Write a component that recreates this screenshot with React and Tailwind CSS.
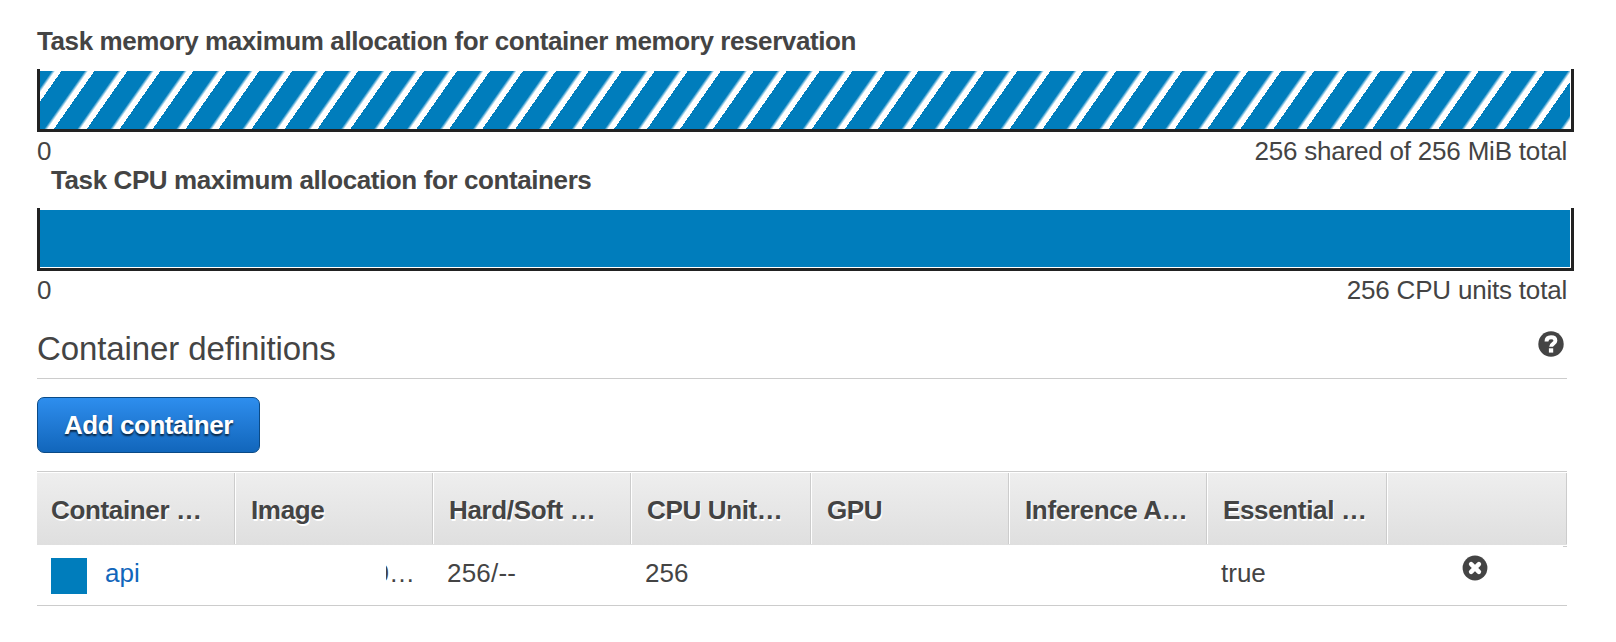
import React from "react";

const columns = [
  { label: "Container …", width: "w-[198px]" },
  { label: "Image", width: "w-[198px]" },
  { label: "Hard/Soft …", width: "w-[198px]" },
  { label: "CPU Unit…", width: "w-[180px]" },
  { label: "GPU", width: "w-[198px]" },
  { label: "Inference A…", width: "w-[198px]" },
  { label: "Essential …", width: "w-[180px]" },
  { label: "", width: "w-[180px]" },
];

function HelpIcon() {
  return (
    <svg viewBox="0 0 26 26" className="block size-[26px]" aria-hidden="true">
      <circle cx="13" cy="13" r="12.7" fill="#444" />
      <path
        d="M8.5 10.4C8.5 7.5 10.4 6.3 13 6.3C15.7 6.3 17.4 7.6 17.4 9.7C17.4 12.6 13.1 12.6 13.1 15.8"
        fill="none"
        stroke="#fff"
        strokeWidth="3.9"
      />
      <rect x="10.9" y="17.3" width="4.3" height="4.3" fill="#fff" />
    </svg>
  );
}

function RemoveIcon() {
  return (
    <svg viewBox="0 0 26 26" className="block size-[26px]" aria-hidden="true">
      <circle cx="13" cy="13" r="12.4" fill="#444" />
      <path d="M9.1 9.1L16.9 16.9M16.9 9.1L9.1 16.9" stroke="#fff" strokeWidth="4.5" strokeLinecap="round" />
    </svg>
  );
}

function Bar({ striped }) {
  return (
    <div className={`h-[63px] w-[1537px] border-x-[3px] border-b-[3px] border-[#222] pt-[2px] pr-px ${striped ? "" : "pb-px"}`}>
      <div
        className={`h-full ${
          striped
            ? "bg-[repeating-linear-gradient(-55deg,#fff_0px,#fff_5px,#007dbc_8px,#007dbc_27px)]"
            : "bg-[#007dbc]"
        }`}
      />
    </div>
  );
}

function Scale({ max }) {
  return (
    <div className="flex h-[30px] w-[1530px] justify-between tracking-[-0.2px]">
      <span>0</span>
      <span>{max}</span>
    </div>
  );
}

export default function App() {
  return (
    <div className="h-[642px] w-[1616px] overflow-hidden bg-white pt-[26px] pl-[37px] font-['Liberation_Sans',Arial,sans-serif] text-[26px] leading-[30px] whitespace-nowrap text-[#444]">
      <h3 className="h-[43px] font-bold tracking-[-0.41px]">
        <span>Task memory maximum allocation for container memory reservation</span>
      </h3>
      <Bar striped />
      <div className="h-[33px] pt-1">
        <Scale max="256 shared of 256 MiB total" />
      </div>
      <h3 className="h-[43px] pl-[14px] font-bold tracking-[-0.4px]">
        <span>Task CPU maximum allocation for containers</span>
      </h3>
      <Bar />
      <div className="h-[59px] pt-1">
        <Scale max="256 CPU units total" />
      </div>

      <div className="flex h-[49px] w-[1530px] justify-between border-b border-[#ccc]">
        <h2 className="text-[33px] leading-[38px] tracking-[-0.1px]">
          <span>Container definitions</span>
        </h2>
        <span className="mt-px mr-[3px]">
          <HelpIcon />
        </span>
      </div>

      <button className="mt-[18px] flex h-[56px] w-[223px] items-center justify-center rounded-[7px] border border-[#0a4a86] bg-linear-to-b from-[#2e8eee] to-[#1166bb] pb-px font-bold tracking-[-0.45px] text-white [text-shadow:0_2px_2px_rgba(0,0,0,0.7)]">
        <span>Add container</span>
      </button>

      <div className="mt-[18px] w-[1530px] border-t border-[#ccc] pt-px">
        <div className="flex h-[72px] bg-linear-to-b from-[#eee] to-[#dfdfdf]">
          {columns.map((c, i) => (
            <div
              key={i}
              className={`${c.width} h-[71px] border-r border-r-[#ccc] pt-[22px] font-bold tracking-[-0.35px] [text-shadow:1px_2px_0_#fff] ${
                i ? "border-l border-l-white pl-[15px]" : "pl-[14px]"
              }`}
            >
              <span>{c.label}</span>
            </div>
          ))}
        </div>
        <div className="flex h-[61px] border-b border-[#ccc] pt-[13px]">
          <div className="flex w-[198px] gap-[18px] pl-[14px]">
            <div className="size-[36px] bg-[#007dbc]" />
            <span className="text-[#1166bb]">api</span>
          </div>
          <div className="flex w-[198px] pl-[151px]">
            <span className="flex w-[3px] justify-end overflow-hidden">
              <span>0</span>
            </span>
            <span>…</span>
          </div>
          <div className="w-[198px] pl-[14px] tracking-[0.2px]">256/--</div>
          <div className="w-[180px] pl-[14px]">256</div>
          <div className="w-[396px]" />
          <div className="w-[180px] pl-[14px]">true</div>
          <div className="flex w-[180px] justify-between pl-[75px]">
            <span className="-mt-[3px]">
              <RemoveIcon />
            </span>
            <span className="-mt-[12px] h-px w-1 bg-[#ccc]" />
          </div>
        </div>
      </div>
    </div>
  );
}
